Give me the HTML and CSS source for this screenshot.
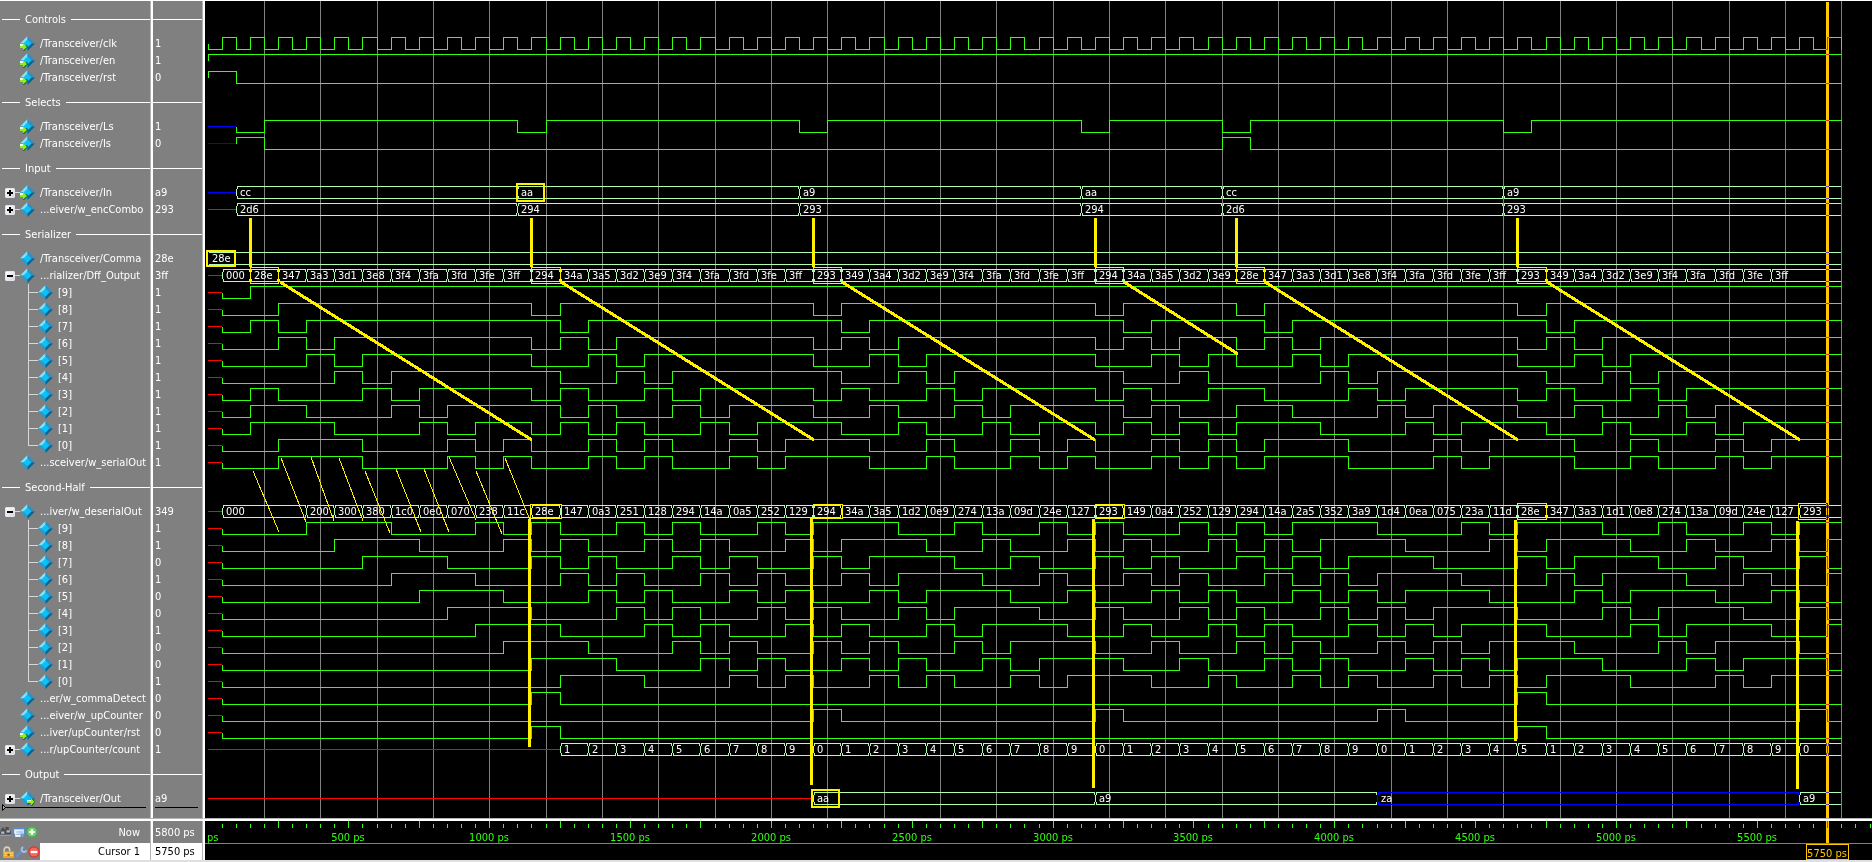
FILE: index.html
```html
<!DOCTYPE html>
<html lang="en">
<head>
<meta charset="utf-8">
<title>Wave - Transceiver</title>
<link rel="stylesheet" href="styles.css">
</head>
<body>
<svg class="sprite" aria-hidden="true">
  <symbol id="net" viewBox="0 0 15 15">
    <path fill="#7fe3fb" d="M7.500 0V4L4 7.500H0z"/>
    <path fill="#2f8fc4" d="M7.500 0L15 7.500H11L7.500 4z"/>
    <path fill="#2a9ace" d="M0 7.500H4L7.500 11V15z"/>
    <path fill="#06638f" d="M15 7.500L7.500 15V11L11 7.500z"/>
    <path fill="#09c2f8" d="M7.500 3.500l4 4-4 4-4-4z"/>
  </symbol>
  <symbol id="net-in" viewBox="0 0 15 15">
    <use href="#net"/>
    <path fill="#1c5c0c" d="M0 12h3v3h1L8 11 7 9z"/>
    <path fill="#8cf01c" d="M0 9.500h3V7l4 4-4 3.500V12H0z"/>
    <path fill="#eaffda" d="M0 8h3v2H0z"/>
  </symbol>
  <symbol id="net-out" viewBox="0 0 15 15">
    <use href="#net"/>
    <path fill="#1c5c0c" d="M7 12h4v3h1L15 11.500 14 9z"/>
    <path fill="#8cf01c" d="M7 9.500h4V7l3.500 4-3.500 3.500V12H7z"/>
    <path fill="#eaffda" d="M7 9h4v1.200H7z"/>
  </symbol>
</svg>

<main class="wave-window">
  <div class="panes">
    <table class="signals">
      <tbody>
        <tr class="divider first"><th scope="row"><div class="rule">Controls</div></th><td><hr></td></tr>
        <tr><th scope="row"><div class="sig"><svg><use href="#net-in"/></svg>/Transceiver/clk</div></th><td>1</td></tr>
        <tr><th scope="row"><div class="sig"><svg><use href="#net-in"/></svg>/Transceiver/en</div></th><td>1</td></tr>
        <tr><th scope="row"><div class="sig"><svg><use href="#net-in"/></svg>/Transceiver/rst</div></th><td>0</td></tr>
        <tr class="divider"><th scope="row"><div class="rule">Selects</div></th><td><hr></td></tr>
        <tr><th scope="row"><div class="sig"><svg><use href="#net-in"/></svg>/Transceiver/Ls</div></th><td>1</td></tr>
        <tr><th scope="row"><div class="sig"><svg><use href="#net-in"/></svg>/Transceiver/Is</div></th><td>0</td></tr>
        <tr class="divider"><th scope="row"><div class="rule">Input</div></th><td><hr></td></tr>
        <tr><th scope="row"><div class="sig group"><button class="toggle" aria-label="Expand In"></button><i class="stub"></i><svg><use href="#net-in"/></svg>/Transceiver/In</div></th><td>a9</td></tr>
        <tr><th scope="row"><div class="sig group"><button class="toggle" aria-label="Expand w_encCombo"></button><i class="stub"></i><svg><use href="#net"/></svg>...eiver/w_encCombo</div></th><td>293</td></tr>
        <tr class="divider"><th scope="row"><div class="rule">Serializer</div></th><td><hr></td></tr>
        <tr><th scope="row"><div class="sig"><svg><use href="#net"/></svg>/Transceiver/Comma</div></th><td>28e</td></tr>
        <tr><th scope="row"><div class="sig group"><button class="toggle open" aria-label="Collapse Dff_Output"></button><i class="stub"></i><svg><use href="#net"/></svg>...rializer/Dff_Output</div></th><td>3ff</td></tr>
        <tr><th scope="row"><div class="sig bit"><svg><use href="#net"/></svg>[9]</div></th><td>1</td></tr>
        <tr><th scope="row"><div class="sig bit"><svg><use href="#net"/></svg>[8]</div></th><td>1</td></tr>
        <tr><th scope="row"><div class="sig bit"><svg><use href="#net"/></svg>[7]</div></th><td>1</td></tr>
        <tr><th scope="row"><div class="sig bit"><svg><use href="#net"/></svg>[6]</div></th><td>1</td></tr>
        <tr><th scope="row"><div class="sig bit"><svg><use href="#net"/></svg>[5]</div></th><td>1</td></tr>
        <tr><th scope="row"><div class="sig bit"><svg><use href="#net"/></svg>[4]</div></th><td>1</td></tr>
        <tr><th scope="row"><div class="sig bit"><svg><use href="#net"/></svg>[3]</div></th><td>1</td></tr>
        <tr><th scope="row"><div class="sig bit"><svg><use href="#net"/></svg>[2]</div></th><td>1</td></tr>
        <tr><th scope="row"><div class="sig bit"><svg><use href="#net"/></svg>[1]</div></th><td>1</td></tr>
        <tr><th scope="row"><div class="sig bit last"><svg><use href="#net"/></svg>[0]</div></th><td>1</td></tr>
        <tr><th scope="row"><div class="sig"><svg><use href="#net"/></svg>...sceiver/w_serialOut</div></th><td>1</td></tr>
        <tr class="divider"><th scope="row"><div class="rule">Second-Half</div></th><td><hr></td></tr>
        <tr><th scope="row"><div class="sig group"><button class="toggle open" aria-label="Collapse w_deserialOut"></button><i class="stub"></i><svg><use href="#net"/></svg>...iver/w_deserialOut</div></th><td>349</td></tr>
        <tr><th scope="row"><div class="sig bit"><svg><use href="#net"/></svg>[9]</div></th><td>1</td></tr>
        <tr><th scope="row"><div class="sig bit"><svg><use href="#net"/></svg>[8]</div></th><td>1</td></tr>
        <tr><th scope="row"><div class="sig bit"><svg><use href="#net"/></svg>[7]</div></th><td>0</td></tr>
        <tr><th scope="row"><div class="sig bit"><svg><use href="#net"/></svg>[6]</div></th><td>1</td></tr>
        <tr><th scope="row"><div class="sig bit"><svg><use href="#net"/></svg>[5]</div></th><td>0</td></tr>
        <tr><th scope="row"><div class="sig bit"><svg><use href="#net"/></svg>[4]</div></th><td>0</td></tr>
        <tr><th scope="row"><div class="sig bit"><svg><use href="#net"/></svg>[3]</div></th><td>1</td></tr>
        <tr><th scope="row"><div class="sig bit"><svg><use href="#net"/></svg>[2]</div></th><td>0</td></tr>
        <tr><th scope="row"><div class="sig bit"><svg><use href="#net"/></svg>[1]</div></th><td>0</td></tr>
        <tr><th scope="row"><div class="sig bit last"><svg><use href="#net"/></svg>[0]</div></th><td>1</td></tr>
        <tr><th scope="row"><div class="sig"><svg><use href="#net"/></svg>...er/w_commaDetect</div></th><td>0</td></tr>
        <tr><th scope="row"><div class="sig"><svg><use href="#net"/></svg>...eiver/w_upCounter</div></th><td>0</td></tr>
        <tr><th scope="row"><div class="sig"><svg><use href="#net-in"/></svg>...iver/upCounter/rst</div></th><td>0</td></tr>
        <tr><th scope="row"><div class="sig group"><button class="toggle" aria-label="Expand count"></button><i class="stub"></i><svg><use href="#net"/></svg>...r/upCounter/count</div></th><td>1</td></tr>
        <tr class="divider"><th scope="row"><div class="rule">Output</div></th><td><hr></td></tr>
        <tr><th scope="row"><div class="sig group"><button class="toggle" aria-label="Expand Out"></button><i class="stub"></i><svg><use href="#net-out"/></svg>/Transceiver/Out</div></th><td>a9</td></tr>
        <tr class="rest"><th><div class="insert"><svg class="handle" viewBox="0 0 4 7"><path fill="#a8a8a8" stroke="#000" d="M0.500 0.500L3.500 3.500L0.500 6.500z"/></svg></div></th><td><div class="insert"></div></td></tr>
      </tbody>
    </table>
    <svg id="waves" class="waves" role="img" aria-label="Waveforms"></svg>
  </div>

  <footer class="cursors">
    <div class="cursor-names">
      <div class="now">
        <button aria-label="Find cursor"><svg viewBox="0 0 11 11"><path fill="#4a4d52" d="M1 3l2-2 1 2h1V1h3v2l2 2v3H0V6z"/><path fill="#b8bcc2" d="M1 5h3v2H1zM6 4h3v2H6z"/><path fill="#86a8cc" d="M0 8h10v1H0z"/></svg></button>
        <button aria-label="Edit timeline"><svg viewBox="0 0 11 11"><path fill="#4f8fd6" d="M0 1h11v7H0z"/><path fill="#dbe9f8" d="M1 3h9v4H1z"/><path fill="#f4f8fd" d="M2 4h5v6H2z"/><path fill="#7da7d8" d="M3 5h6v1H3zM3 7h5v1H3zM8 8l2-1v2l-2 2z"/></svg></button>
        <button aria-label="Add cursor"><svg viewBox="0 0 11 11"><circle cx="5.500" cy="5.500" r="5.200" fill="#46b04a"/><circle cx="5.500" cy="5.500" r="4.200" fill="#74cc70"/><path fill="#fff" d="M4.500 3h2v1.500H8v2H6.500V8h-2V6.500H3v-2h1.500z"/></svg></button>
        <span>Now</span>
      </div>
      <div class="cursor">
        <button aria-label="Lock cursor"><svg viewBox="0 0 11 11"><path fill="none" stroke="#d8d0b8" stroke-width="1.500" d="M2 6V3.500a2.500 2.500 0 0 1 5 0V5"/><path fill="#e8a52c" d="M1 5h10v6H1z"/><path fill="#fbd778" d="M2 6h8v1H2zM2 8h8v1H2z"/><path fill="#8a5d10" d="M5 7h2v2H5z"/></svg></button>
        <button aria-label="Edit cursor"><svg viewBox="0 0 11 11"><path fill="none" stroke="#5c92d8" stroke-width="2.200" stroke-linecap="round" d="M1.500 9.500L6.500 4.500"/><path fill="none" stroke="#9cc2ee" stroke-width="1.800" d="M7.500 1a2.300 2.300 0 1 0 3 3"/></svg></button>
        <button aria-label="Delete cursor"><svg viewBox="0 0 11 11"><circle cx="5.500" cy="5.500" r="5.200" fill="#d8322a"/><circle cx="5.500" cy="5.500" r="4.200" fill="#f06a5e"/><path fill="#fff" d="M2.500 4.500h6v2h-6z"/></svg></button>
        <span>Cursor 1</span>
      </div>
    </div>
    <div class="cursor-values">
      <div class="now">5800 ps</div>
      <div class="cursor">5750 ps</div>
    </div>
    <svg id="ruler" class="waves" role="img" aria-label="Timeline"></svg>
  </footer>
</main>
<script src="waves.js"></script>
</body>
</html>
```

FILE: styles.css
```css
* {
  box-sizing: border-box;
}

body {
  margin: 0;
  font: 11px/17px "DejaVu Sans Condensed", "Noto Sans", sans-serif;
  color: #fff;
  background: #000;
}

.sprite {
  display: none;
}

.wave-window {
  display: flex;
  flex-direction: column;
  min-height: 100vh;
  border-top: 1px solid #fff;
}

.panes {
  display: flex;
  flex: 1;
  border-bottom: 2px solid #fff;
}

.waves {
  flex: 1;
  min-width: 0;
  background: #000;
  border-left: 2px solid #fff;
  overflow: hidden;
  font-size: 11px;
}

.panes > * {
  border-bottom: 1px solid #b4b4b4;
}

/* signal list */
.signals {
  width: 203px;
  table-layout: fixed;
  border-collapse: separate;
  border-spacing: 0;
  background: #808080;
}

.signals tr {
  height: 17px;
}

.signals th,
.signals td {
  padding: 0;
  font-weight: normal;
  text-align: left;
  white-space: nowrap;
  overflow: hidden;
  vertical-align: top;
}

.signals th {
  width: 151px;
  border-right: 1px solid #b4b4b4;
}

.signals td {
  width: 52px;
  padding-left: 2px;
  border-left: 2px solid #fff;
  border-right: 1px solid #b4b4b4;
}

.sig {
  display: flex;
  align-items: center;
  height: 17px;
  padding-left: 20px;
}

.sig svg {
  flex: none;
  width: 15px;
  height: 15px;
  margin-right: 5px;
}

.sig.group {
  padding-left: 5px;
}

.stub {
  flex: none;
  width: 5px;
  height: 1px;
  background: #d8d8d8;
}

.toggle {
  flex: none;
  width: 10px;
  height: 10px;
  padding: 0;
  border: 1px solid #e4e4ea;
  border-radius: 1px;
  background:
    linear-gradient(#000, #000) center / 6px 2px no-repeat,
    linear-gradient(#000, #000) center / 2px 6px no-repeat,
    linear-gradient(135deg, #fff, #d4d8e0);
}

.toggle.open {
  background:
    linear-gradient(#000, #000) center / 6px 2px no-repeat,
    linear-gradient(135deg, #fff, #d4d8e0);
}

.sig.bit {
  padding-left: 28px;
}

.sig.bit::before {
  content: "";
  flex: none;
  width: 10px;
  height: 17px;
  background:
    linear-gradient(#d8d8d8, #d8d8d8) left top / 1px 17px no-repeat,
    linear-gradient(#d8d8d8, #d8d8d8) left center / 10px 1px no-repeat;
}

.sig.bit.last::before {
  background:
    linear-gradient(#d8d8d8, #d8d8d8) left top / 1px 8px no-repeat,
    linear-gradient(#d8d8d8, #d8d8d8) left center / 10px 1px no-repeat;
}

.signals .divider {
  height: 32px;
}

.signals .divider.first {
  height: 34px;
}

.signals .divider th,
.signals .divider td {
  padding-top: 8px;
}

.signals .divider.first th,
.signals .divider.first td {
  padding-top: 10px;
}

.signals .divider td {
  padding-left: 0;
}

.rule {
  display: flex;
  align-items: center;
  gap: 5px;
  padding-left: 2px;
}

.rule::before,
.rule::after {
  content: "";
  height: 1px;
  background: #fff;
}

.rule::before {
  width: 18px;
}

.rule::after {
  flex: 1;
}

hr {
  margin: 8px 0 0;
  border: 0;
  height: 1px;
  background: #fff;
}

.signals .rest {
  height: auto;
}

.signals .rest th {
  overflow: visible;
}

.insert {
  display: flex;
  align-items: center;
  height: 1px;
  background: #000;
}

.handle {
  flex: none;
  width: 4px;
  height: 7px;
}

th .insert {
  margin: 0 4px 0 2px;
}

td .insert {
  margin-right: 4px;
}

/* cursor bar */
.cursors {
  display: flex;
  background: #808080;
  border-bottom: 2px solid #e0e0e0;
}

.cursor-names {
  width: 151px;
  border-right: 1px solid #b4b4b4;
}

.cursor-values {
  width: 52px;
  border-left: 2px solid #fff;
  border-right: 1px solid #b4b4b4;
}

.cursor-values div {
  padding-left: 2px;
}

.now,
.cursor {
  display: flex;
  align-items: center;
}

.now {
  height: 22px;
}

.cursor {
  height: 17px;
  color: #000;
}

.cursor-values .cursor,
.cursor-names .cursor span {
  background: #fff;
}

.cursor-names span {
  flex: 1;
  padding-right: 10px;
  text-align: right;
}

.cursor-names .cursor {
  padding-left: 2px;
}

.cursor-names button {
  display: flex;
  flex: none;
  width: 12px;
  margin-right: 1px;
  padding: 0;
  border: 0;
  background: none;
}

.cursor-names .cursor button:last-of-type {
  margin-right: 0;
}

.cursor-names button svg {
  width: 12px;
  height: 12px;
}

#ruler {
  height: 39px;
}

/* drawing */
.crisp {
  shape-rendering: crispEdges;
}

.grid { stroke: #808080; }
.wire { fill: none; stroke: #33ff11; }
.bus { fill: none; stroke: #b0ffb0; }
.unknown { fill: none; stroke: #f00; }
.floating { fill: none; stroke: #00f; }
.value { fill: #fff; }
.tick { stroke: #33ff11; }
.time { fill: #33ff11; text-anchor: middle; }
.lane { stroke: #808080; }

.mark {
  fill: none;
  stroke: #fff000;
}

.thick { stroke-width: 3; }
.box { stroke-width: 2; }

.cursor-line {
  fill: #ffc800;
  mix-blend-mode: difference;
}

.cursor-box {
  fill: none;
  stroke: #ffc800;
}

.cursor-time {
  fill: #ffc800;
  text-anchor: middle;
}
```

FILE: waves.js
```javascript
const NS = "http://www.w3.org/2000/svg";
const END = 5800;
const CURSOR = 5750;

/* Window pixel of a time in ps. */
const X = t => Math.round(207.5 + 0.2817 * t);

function add(parent, tag, attrs, text) {
  const el = document.createElementNS(NS, tag);
  for (const k in attrs) el.setAttribute(k, attrs[k]);
  if (text !== undefined) el.textContent = text;
  parent.appendChild(el);
  return el;
}

function path(parent, cls, d) {
  if (d) add(parent, "path", { class: cls, d });
}

function layer(id, y) {
  return add(document.getElementById(id), "g", { transform: `translate(-205 ${-y})` });
}

const waves = layer("waves", 1);

for (let t = 200; t <= END; t += 200) {
  path(waves, "grid crisp", `M${X(t) + 0.5} 1V818`);
}

/* Single-bit trace; steps is a list of [time, level], top is the y of level 1. */
function wire(top, steps, before) {
  const mid = top + 6.5;
  const start = steps[0][0];
  if (before) path(waves, before + " crisp", `M208 ${mid}H${X(start)}`);
  let d = `M${X(start) + 0.5} ${mid}`;
  for (const [t, level] of steps) {
    d += `H${X(t) + 0.5}V${level ? top + 0.5 : top + 12.5}`;
  }
  path(waves, "wire crisp", d + `H${X(END) + 0.5}`);
}

/* Bus trace; steps is a list of [time, label, class?]. */
function bus(top, steps, before) {
  const bot = top + 12;
  const start = steps[0][0];
  if (before) path(waves, before + " crisp", `M208 ${top + 6.5}H${X(start)}`);
  steps.forEach(([t, label, cls], i) => {
    const a = X(t);
    const last = i === steps.length - 1;
    const b = last ? X(END) : X(steps[i + 1][0]);
    let d = `M${a + 1} ${top + 0.5}H${b}M${a + 1} ${bot + 0.5}H${b}`;
    if (t > 0) d += `M${a + 1.5} ${top}v3M${a + 1.5} ${bot + 1}v-3M${a + 0.5} ${top + 3}v7`;
    if (!last) d += `M${b - 0.5} ${top}v3M${b - 0.5} ${bot + 1}v-3`;
    path(waves, (cls || "bus") + " crisp", d);
    if (label) add(waves, "text", { class: "value", x: a + 4, y: top + 10 }, label);
  });
}

/* Level list of one bit of a bus. */
const bit = (steps, n) => steps.map(([t, v]) => [t, (parseInt(v, 16) >> n) & 1]);

/* Low trace with high pulses of 100 ps. */
function pulses(from, times) {
  const steps = [[from, 0]];
  for (const t of times) steps.push([t, 1], [t + 100, 0]);
  return steps;
}

const every100 = (start, text) => text.split(" ").map((v, i) => [start + i * 100, v]);

const clk = [];
for (let t = 0; t <= END; t += 50) clk.push([t, (t / 50) % 2]);
wire(37, clk);
wire(54, [[0, 1]]);
wire(71, [[0, 1], [100, 0]]);

const ls = [[100, 0], [200, 1]];
for (const t of [1100, 2100, 3100, 3600, 4600]) ls.push([t, 0], [t + 100, 1]);
wire(120, ls, "floating");
wire(137, [[100, 1], [200, 0], [3600, 1], [3700, 0]], "floating");

const loads = [100, 1100, 2100, 3100, 3600, 4600];
bus(186, ["cc", "aa", "a9", "aa", "cc", "a9"].map((v, i) => [loads[i], v]), "floating");
bus(203, ["2d6", "294", "293", "294", "2d6", "293"].map((v, i) => [loads[i], v]), "unknown");
bus(252, [[0, "28e"]]);

const dff = [[50, "000"]].concat(every100(150,
  "28e 347 3a3 3d1 3e8 3f4 3fa 3fd 3fe 3ff " +
  "294 34a 3a5 3d2 3e9 3f4 3fa 3fd 3fe 3ff " +
  "293 349 3a4 3d2 3e9 3f4 3fa 3fd 3fe 3ff " +
  "294 34a 3a5 3d2 3e9 " +
  "28e 347 3a3 3d1 3e8 3f4 3fa 3fd 3fe 3ff " +
  "293 349 3a4 3d2 3e9 3f4 3fa 3fd 3fe 3ff"));
bus(269, dff, "unknown");
for (let n = 9; n >= 0; n--) wire(286 + (9 - n) * 17, bit(dff, n), "unknown");
wire(456, bit(dff, 0), "unknown");

const deserial = [[50, "000"]].concat(every100(350,
  "200 300 380 1c0 0e0 070 238 11c " +
  "28e 147 0a3 251 128 294 14a 0a5 252 129 " +
  "294 34a 3a5 1d2 0e9 274 13a 09d 24e 127 " +
  "293 149 0a4 252 129 294 14a 2a5 352 3a9 " +
  "1d4 0ea 075 23a 11d " +
  "28e 347 3a3 1d1 0e8 274 13a 09d 24e 127 293"));
bus(505, deserial.concat([[5750, ""]]), "unknown");
const deserialAll = deserial.concat([[5750, "349"]]);
for (let n = 9; n >= 0; n--) wire(522 + (9 - n) * 17, bit(deserialAll, n), "unknown");

wire(692, pulses(50, [1150, 4650]), "unknown");
wire(709, pulses(50, [2150, 3150, 4150, 5650]), "unknown");
wire(726, pulses(50, [1150, 4650]), "unknown");
bus(743, every100(1250,
  "1 2 3 4 5 6 7 8 9 0 1 2 3 4 5 6 7 8 9 0 1 2 3 4 5 6 7 8 9 " +
  "0 1 2 3 4 5 1 2 3 4 5 6 7 8 9 0").concat([[5750, ""]]), "unknown");
bus(792, [[2150, "aa"], [3150, "a9"], [4150, "za", "floating"], [5650, "a9"]], "unknown");

/* Annotations: word loads, shift paths and comma alignment. */
for (const t of [150, 1150, 2150, 3150, 3650, 4650]) {
  const a = X(t) + 0.5;
  path(waves, "mark thick crisp", `M${a} 218V267`);
  add(waves, "rect", { class: "mark crisp", x: a, y: 267.5, width: X(t + 100) + 0.5 - a, height: 16 });
}

const shifts = [
  [280, 282, 532, 440], [561, 282, 814, 440], [842, 282, 1095, 440],
  [1124, 282, 1238, 354], [1265, 282, 1518, 440], [1547, 282, 1800, 440]
];
for (const [a, b, c, d] of shifts) path(waves, "mark thick crisp", `M${a} ${b}L${c} ${d}`);

const links = [
  [253, 471, 279, 532], [281, 458, 306, 522], [311, 457, 334, 521], [339, 458, 363, 521],
  [365, 471, 390, 533], [396, 469, 421, 532], [424, 469, 449, 532], [449, 457, 476, 520],
  [476, 471, 502, 534], [505, 458, 530, 520]
];
for (const [a, b, c, d] of links) path(waves, "mark crisp", `M${a} ${b}L${c} ${d}`);

const frames = [[530, 504, 31, 14], [813, 504, 29, 14], [1095, 504, 29, 14], [1517, 503, 29, 16], [1798, 503, 29, 16]];
for (const [x, y, width, height] of frames) {
  add(waves, "rect", { class: "mark crisp", x: x + 0.5, y: y + 0.5, width, height });
}

const drops = [[529.5, 519, 747], [811.5, 518, 785], [1093.5, 519, 788], [1515.5, 520, 741], [1797.5, 521, 789]];
for (const [x, a, b] of drops) path(waves, "mark thick crisp", `M${x} ${a}V${b}`);

for (const [x, y, width, height] of [[207, 251, 28, 15], [517, 184, 27, 17], [812, 790, 27, 17]]) {
  add(waves, "rect", { class: "mark box crisp", x, y, width, height });
}

add(waves, "rect", { class: "cursor-line", x: X(CURSOR) - 1, y: 2, width: 3, height: 816 });

/* Timeline */
const ruler = layer("ruler", 821);
const lanes = document.getElementById("ruler");
add(lanes, "line", { class: "lane crisp", x1: 0, x2: "100%", y1: 22.5, y2: 22.5 });

for (let t = 50; X(t) < 205 + lanes.clientWidth; t += 50) {
  path(ruler, "tick crisp", `M${X(t) + 0.5} ${t % 250 ? 824 : 821}V828`);
}

const clip = add(ruler, "clipPath", { id: "from-zero" });
add(clip, "rect", { x: 208, y: 821, width: 4000, height: 40 });
const times = add(ruler, "g", { "clip-path": "url(#from-zero)" });
for (let t = 0; t <= 5500; t += 500) {
  add(times, "text", { class: "time", x: X(t), y: 841 }, t + " ps");
}

add(ruler, "rect", { class: "cursor-line", x: X(CURSOR) - 1, y: 821, width: 3, height: 22 });
add(ruler, "rect", { class: "cursor-box crisp", x: X(CURSOR) - 20.5, y: 844.5, width: 42, height: 15 });
add(ruler, "text", { class: "cursor-time", x: X(CURSOR), y: 857 }, CURSOR + " ps");
```
